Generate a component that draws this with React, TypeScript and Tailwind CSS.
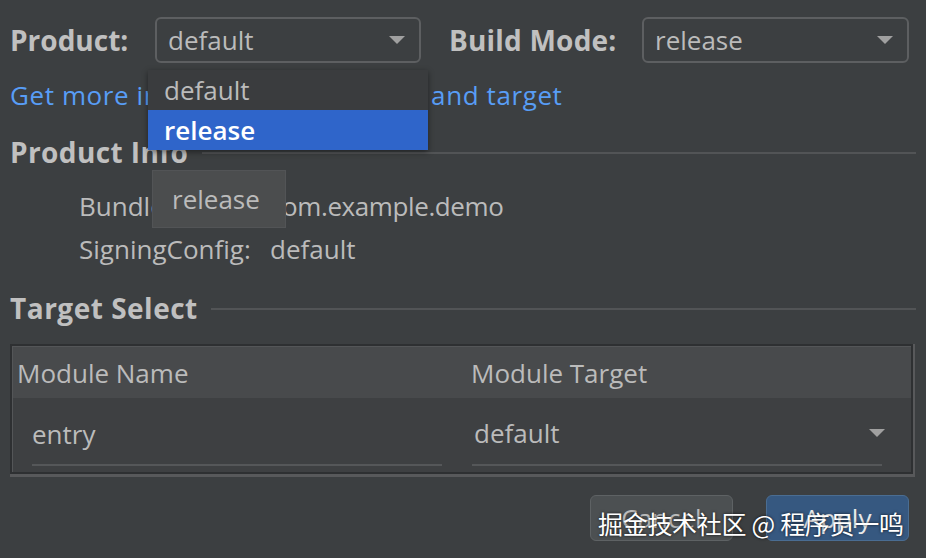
import React from "react";

const Arrow = ({ className = "" }: { className?: string }) => (
  <svg width="18" height="10" viewBox="0 0 18 10" className={className}>
    <path d="M1 1 L17 1 L9 9 Z" fill="#a0a0a0" />
  </svg>
);

const Combo = ({ value, width }: { value: string; width: string }) => (
  <div
    className={`${width} h-[46px] flex items-center justify-between pl-[11px] pr-[13px] border-2 border-[#5d5f61] rounded-[6px] text-[26px] text-[#bbbbbb]`}
  >
    <span className="leading-none">{value}</span>
    <Arrow />
  </div>
);

export default function App() {
  return (
    <div
      className="relative w-[926px] h-[558px] bg-[#3c3f41] overflow-hidden text-[#bbbbbb]"
      style={{ fontFamily: '"Open Sans", "Noto Sans CJK SC", sans-serif' }}
    >
      <div className="pl-[10px] pr-[10px] pt-[17px] flex flex-col">
        {/* Row 1 */}
        <div className="flex items-center h-[46px]">
          <div className="w-[145px] text-[28px] font-bold text-[#c0c0c0] leading-none">Product:</div>
          <Combo value="default" width="w-[266px]" />
          <div className="ml-[28px] w-[193px] text-[28px] font-bold text-[#c0c0c0] leading-none tracking-[0.2px]">Build Mode:</div>
          <Combo value="release" width="w-[267px]" />
        </div>

        {/* Link */}
        <div className="mt-[16px] h-[32px] flex items-center text-[26px] text-[#589df6] leading-none tracking-[0.6px]">
          Get more info about the product and target
        </div>

        {/* Product Info */}
        <div className="mt-[25px] h-[32px] flex items-center gap-[14px]">
          <span className="text-[28px] font-bold text-[#c0c0c0] leading-none whitespace-nowrap tracking-[0.4px]">Product Info</span>
          <div className="flex-1 h-[2px] bg-[#525456] mt-[2px]" />
        </div>

        <div className="mt-[22px] pl-[69px] flex flex-col gap-[11px] text-[26px] leading-none">
          <div className="h-[32px] flex items-center">
            <span className="w-[191px]">BundleName:</span>
            <span className="tracking-[-0.4px]">com.example.demo</span>
          </div>
          <div className="h-[32px] flex items-center">
            <span className="w-[191px]">SigningConfig:</span>
            <span>default</span>
          </div>
        </div>

        {/* Target Select */}
        <div className="mt-[27px] h-[32px] flex items-center gap-[13px]">
          <span className="text-[28px] font-bold text-[#c0c0c0] leading-none whitespace-nowrap tracking-[0.5px]">Target Select</span>
          <div className="flex-1 h-[2px] bg-[#525456] mt-[2px]" />
        </div>

        {/* Table */}
        <div className="mt-[20px] w-[905px] border-r-2 border-b-[3px] border-[#58595b]">
          <div className="border-2 border-[#2e3032]">
            <div className="border-t border-l border-[#545658]">
              <div className="h-[51px] bg-[#484a4c] flex items-center text-[26px] leading-none">
                <div className="w-[451px] pl-[4px]">Module Name</div>
                <div className="flex-1 pl-[7px]">Module Target</div>
              </div>
              <div className="h-[74px] bg-[#3e4042] flex text-[26px] leading-none">
                <div className="w-[451px] pl-[19px] flex flex-col">
                  <div className="h-[66px] flex items-center pt-[6px]">entry</div>
                  <div className="w-[410px] h-[2px] bg-[#555759]" />
                </div>
                <div className="flex-1 pl-[8px] flex flex-col">
                  <div className="w-[410px] h-[66px] flex items-center justify-between pt-[4px]">
                    <span className="pl-[2px]">default</span>
                    <Arrow className="mr-[-4px]" />
                  </div>
                  <div className="w-[410px] h-[2px] bg-[#555759]" />
                </div>
              </div>
            </div>
          </div>
        </div>

        {/* Buttons */}
        <div className="mt-[18px] flex justify-end gap-[33px] pr-[7px]">
          <div className="w-[143px] h-[46px] rounded-[6px] bg-[#4c5052] border border-[#5e6264] flex items-center justify-center text-[26px] text-[#bbbbbb]">
            Cancel
          </div>
          <div className="w-[143px] h-[46px] rounded-[6px] bg-[#365880] border border-[#4a6d92] flex items-center justify-center text-[26px] text-[#e8e8e8]">
            Apply
          </div>
        </div>
      </div>

      {/* Dropdown popup */}
      <div className="absolute left-[148px] top-[70px] w-[280px] h-[80px] bg-[#3a3c3e] shadow-[0_2px_6px_rgba(0,0,0,0.45)] flex flex-col text-[26px] leading-none">
        <div className="h-[40px] flex items-center pl-[16px] text-[#bbbbbb]">default</div>
        <div className="h-[40px] flex items-center pl-[16px] bg-[#2f65ca] text-white font-semibold">release</div>
      </div>

      {/* Tooltip */}
      <div className="absolute left-[152px] top-[170px] w-[134px] h-[58px] bg-[#4b4d4e] border border-[#525456] flex items-center pl-[19px] text-[26px] text-[#bbbbbb] leading-none">
        release
      </div>

      {/* Watermark */}
      <div
        className="absolute left-[598px] top-[511px] text-[25px] leading-none text-white whitespace-nowrap tracking-[-0.3px]"
        style={{ textShadow: "0 0 3px rgba(0,0,0,0.8)", fontFamily: '"Noto Sans CJK SC", sans-serif' }}
      >
        掘金技术社区 @ 程序员一鸣
      </div>
    </div>
  );
}
